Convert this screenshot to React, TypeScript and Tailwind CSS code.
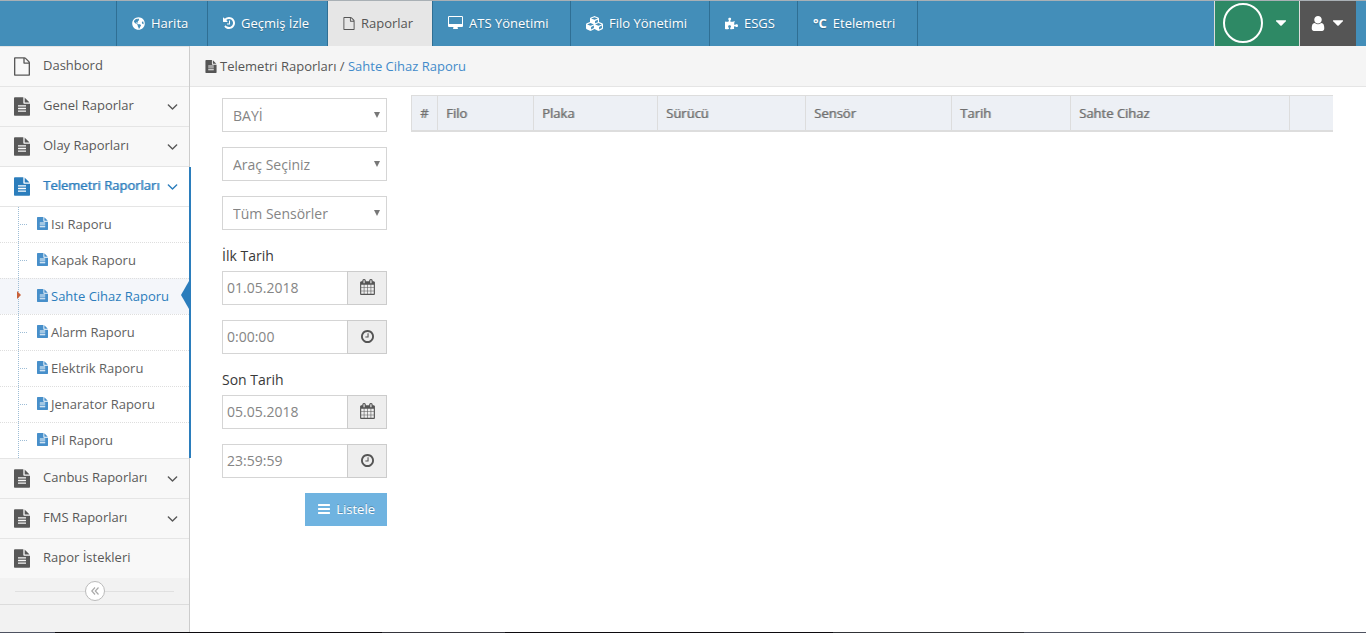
import { useState } from 'react';
import type { ReactNode } from 'react';
import { FaCubes, FaGlobeAmericas, FaPuzzlePiece } from 'react-icons/fa';

interface IconProps {
  className?: string;
}

const bar = (y: number) =>
  `M1664 ${y}v128q0 26-19 45t-45 19h-1408q-26 0-45-19t-19-45v-128q0-26 19-45t45-19h1408q26 0 45 19t19 45z`;

const glyph = (viewBox: string, d: string) =>
  function Glyph({ className = '' }: IconProps) {
    return (
      <svg viewBox={viewBox} fill="currentColor" aria-hidden="true" className={`shrink-0 ${className}`}>
        <path d={d} />
      </svg>
    );
  };

const FileIcon = glyph(
  '128 0 1536 1792',
  'M1596 380q28 28 48 76t20 88v1152q0 40-28 68t-68 28h-1344q-40 0-68-28t-28-68v-1600q0-40 28-68t68-28h896q40 0 88 20t76 48zm-444-244v376h376q-10-29-22-41l-313-313q-12-12-41-22zm384 1528v-1024h-416q-40 0-68-28t-28-68v-416h-768v1536h1280z'
);
const FileTextIcon = glyph(
  '128 0 1536 1792',
  'M1596 476q14 14 28 36h-472v-472q22 14 36 28zm-476 164h544v1056q0 40-28 68t-68 28h-1344q-40 0-68-28t-28-68v-1600q0-40 28-68t68-28h800v544q0 40 28 68t68 28zm160 736v-64q0-14-9-23t-23-9h-704q-14 0-23 9t-9 23v64q0 14 9 23t23 9h704q14 0 23-9t9-23zm0-256v-64q0-14-9-23t-23-9h-704q-14 0-23 9t-9 23v64q0 14 9 23t23 9h704q14 0 23-9t9-23zm0-256v-64q0-14-9-23t-23-9h-704q-14 0-23 9t-9 23v64q0 14 9 23t23 9h704q14 0 23-9t9-23z'
);
const AngleDownIcon = glyph(
  '384 640 1024 608',
  'M1395 736q0 13-10 23l-466 466q-10 10-23 10t-23-10l-466-466q-10-10-10-23t10-23l50-50q10-10 23-10t23 10l393 393 393-393q10-10 23-10t23 10l50 50q10 10 10 23z'
);
const CaretDownIcon = glyph(
  '384 640 1024 576',
  'M1408 704q0 26-19 45l-448 448q-19 19-45 19t-45-19l-448-448q-19-19-19-45t19-45 45-19h896q26 0 45 19t19 45z'
);
const UserIcon = glyph(
  '256 128 1280 1536',
  'M1536 1399q0 109-62.5 187t-150.5 78h-854q-88 0-150.5-78t-62.5-187q0-85 8.5-160.5t31.5-152 58.5-131 94-89 134.5-34.5q131 128 313 128t313-128q76 0 134.5 34.5t94 89 58.5 131 31.5 152 8.5 160.5zm-256-887q0 159-112.5 271.5t-271.5 112.5-271.5-112.5-112.5-271.5 112.5-271.5 271.5-112.5 271.5 112.5 112.5 271.5z'
);
const BarsIcon = glyph('128 256 1536 1280', bar(1344) + bar(832) + bar(320));
const DesktopIcon = glyph(
  '-64 0 1920 1792',
  'M1728 992v-832q0-13-9.5-22.5t-22.5-9.5h-1600q-13 0-22.5 9.5t-9.5 22.5v832q0 13 9.5 22.5t22.5 9.5h1600q13 0 22.5-9.5t9.5-22.5zm128-832v1088q0 66-47 113t-113 47h-544q0 37 16 77.5t32 71 16 43.5q0 26-19 45t-45 19h-512q-26 0-45-19t-19-45q0-14 16-44t32-70 16-78h-544q-66 0-113-47t-47-113v-1088q0-66 47-113t113-47h1600q66 0 113 47t47 113z'
);
const HistoryIcon = glyph(
  '128 128 1536 1536',
  'M1664 896q0 156-61 298t-164 245-245 164-298 61q-172 0-327-72.5t-264-204.5q-7-10-6.5-22.5t8.5-20.5l137-138q10-9 25-9 16 2 23 12 73 95 179 147t225 52q104 0 198.5-40.5t163.5-109.5 109.5-163.5 40.5-198.5-40.5-198.5-109.5-163.5-163.5-109.5-198.5-40.5q-98 0-188 35.5t-160 101.5l137 138q31 30 14 69-17 40-59 40h-448q-26 0-45-19t-19-45v-448q0-42 40-59 39-17 69 14l130 129q107-101 244.5-156.5t284.5-55.5q156 0 298 61t245 164 164 245 61 298zm-640-288v448q0 14-9 23t-23 9h-320q-14 0-23-9t-9-23v-64q0-14 9-23t23-9h224v-352q0-14 9-23t23-9h64q14 0 23 9t9 23z'
);
const CalendarIcon = glyph(
  '64 0 1664 1792',
  'M192 1664h288v-288h-288v288zm352 0h320v-288h-320v288zm-352-352h288v-320h-288v320zm352 0h320v-320h-320v320zm-352-384h288v-288h-288v288zm736 736h320v-288h-320v288zm-384-736h320v-288h-320v288zm768 736h288v-288h-288v288zm-384-352h320v-320h-320v320zm-352-864v-288q0-13-9.5-22.5t-22.5-9.5h-64q-13 0-22.5 9.5t-9.5 22.5v288q0 13 9.5 22.5t22.5 9.5h64q13 0 22.5-9.5t9.5-22.5zm736 864h288v-320h-288v320zm-384-384h320v-288h-320v288zm384 0h288v-288h-288v288zm32-480v-288q0-13-9.5-22.5t-22.5-9.5h-64q-13 0-22.5 9.5t-9.5 22.5v288q0 13 9.5 22.5t22.5 9.5h64q13 0 22.5-9.5t9.5-22.5zm384-64v1280q0 52-38 90t-90 38h-1408q-52 0-90-38t-38-90v-1280q0-52 38-90t90-38h128v-96q0-66 47-113t113-47h64q66 0 113 47t47 113v96h384v-96q0-66 47-113t113-47h64q66 0 113 47t47 113v96h128q52 0 90 38t38 90z'
);
const ClockIcon = glyph(
  '128 128 1536 1536',
  'M1024 544v448q0 14-9 23t-23 9h-320q-14 0-23-9t-9-23v-64q0-14 9-23t23-9h224v-352q0-14 9-23t23-9h64q14 0 23 9t9 23zm416 352q0-148-73-273t-198-198-273-73-273 73-198 198-73 273 73 273 198 198 273 73 273-73 198-198 73-273zm224 0q0 209-103 385.5t-279.5 279.5-385.5 103-385.5-103-279.5-279.5-103-385.5 103-385.5 279.5-279.5 385.5-103 385.5 103 279.5 279.5 103 385.5z'
);

interface NavItem {
  label: string;
  width: string;
  icon: ReactNode;
  active?: boolean;
}

const navItems: NavItem[] = [
  { label: 'Harita', width: 'w-[91px]', icon: <FaGlobeAmericas className="size-[13px]" /> },
  { label: 'Geçmiş İzle', width: 'w-[120px]', icon: <HistoryIcon className="size-3" /> },
  { label: 'Raporlar', width: 'w-[105px]', icon: <FileIcon className="h-[13px] w-3" />, active: true },
  { label: 'ATS Yönetimi', width: 'w-[138px]', icon: <DesktopIcon className="h-[14px] w-[15px]" /> },
  { label: 'Filo Yönetimi', width: 'w-[139px]', icon: <FaCubes className="size-[17px]" /> },
  { label: 'ESGS', width: 'w-[88px]', icon: <FaPuzzlePiece className="size-[13px]" /> },
  { label: 'Etelemetri', width: 'w-[120px]', icon: <span className="font-bold">°C</span> },
];

interface MenuItem {
  label: string;
  icon?: 'file';
  arrow?: boolean;
  children?: string[];
}

const menuItems: MenuItem[] = [
  { label: 'Dashbord', icon: 'file' },
  { label: 'Genel Raporlar', arrow: true },
  { label: 'Olay Raporları', arrow: true },
  {
    label: 'Telemetri Raporları',
    arrow: true,
    children: [
      'Isı Raporu',
      'Kapak Raporu',
      'Sahte Cihaz Raporu',
      'Alarm Raporu',
      'Elektrik Raporu',
      'Jenarator Raporu',
      'Pil Raporu',
    ],
  },
  { label: 'Canbus Raporları', arrow: true },
  { label: 'FMS Raporları', arrow: true },
  { label: 'Rapor İstekleri' },
];

const columns = [
  { label: '#', width: 'w-[26px]' },
  { label: 'Filo', width: 'w-[96px]' },
  { label: 'Plaka', width: 'w-[124px]' },
  { label: 'Sürücü', width: 'w-[148px]' },
  { label: 'Sensör', width: 'w-[146px]' },
  { label: 'Tarih', width: 'w-[119px]' },
  { label: 'Sahte Cihaz', width: 'w-[219px]' },
  { label: '', width: 'w-[44px]' },
];

function Navbar() {
  return (
    <header className="flex h-[46px] border-t border-[#a9b0b5] bg-[#438eb9] text-white">
      <nav className="ml-[116px] flex border-r border-[#2f6f94]">
        {navItems.map((item) => (
          <a
            key={item.label}
            href="#"
            className={`flex items-center gap-[6px] border-l border-[#2f6f94] pb-px pl-[15px] whitespace-nowrap ${item.width} ${
              item.active
                ? 'bg-[#e6e6e6] text-[#555]'
                : '[text-shadow:0_1px_1px_rgba(0,0,0,0.25)] hover:bg-[#3b83ad]'
            }`}
          >
            {item.icon}
            <span className="pb-px">{item.label}</span>
          </a>
        ))}
      </nav>
      <div className="mr-[10px] ml-auto flex">
        <button
          type="button"
          aria-label="Bildirimler"
          className="flex w-[85px] items-center gap-[13px] border-l border-[#ddd] bg-[#2e8965] pb-px pl-2"
        >
          <span className="size-10 rounded-full border-2 border-white" />
          <CaretDownIcon className="h-[6px] w-[10px]" />
        </button>
        <button
          type="button"
          aria-label="Kullanıcı"
          className="flex w-[57px] items-center gap-2 border-l border-[#ddd] bg-[#555] pb-px pl-[11px]"
        >
          <UserIcon className="h-[15px] w-[14px]" />
          <CaretDownIcon className="h-[6px] w-[10px]" />
        </button>
      </div>
    </header>
  );
}

function SubMenu({ items }: { items: string[] }) {
  const [selected, setSelected] = useState('Sahte Cihaz Raporu');

  return (
    <ul className="relative border-t border-[#e5e5e5] bg-white">
      {items.map((label, i) => {
        const active = label === selected;
        return (
          <li
            key={label}
            className={`relative ${i > 0 ? 'h-9 border-t border-dotted border-[#dedede]' : 'h-[35px]'} ${
              active ? 'bg-[#f4f6fa]' : ''
            }`}
          >
            <a
              href="#"
              onClick={() => setSelected(label)}
              className={`flex h-[33px] items-center gap-[3px] pl-[37px] ${
                active ? 'text-[#2b7dbc]' : 'text-[#616161]'
              }`}
            >
              <FileTextIcon className="h-[13px] w-[11px] text-[#478fca]" />
              {label}
            </a>
            {active ? (
              <>
                <svg viewBox="0 0 4 8" className="absolute top-3 left-[17px] z-10 h-2 w-1 fill-[#c86139]" aria-hidden="true">
                  <path d="M0 0 4 4 0 8z" />
                </svg>
                <svg viewBox="0 0 8 28" className="absolute top-[2px] right-0 h-7 w-2 fill-[#2b7dbc]" aria-hidden="true">
                  <path d="M8 0v28L0 14z" />
                </svg>
              </>
            ) : (
              <span className="absolute top-[17px] left-5 w-[7px] border-t border-dotted border-[#9dbdd6]" />
            )}
          </li>
        );
      })}
      <li aria-hidden="true" className="absolute inset-y-0 left-[18px] border-l border-dotted border-[#9dbdd6]" />
    </ul>
  );
}

function Sidebar() {
  return (
    <aside className="w-[190px] shrink-0 border-r border-[#ccc] bg-[#f2f2f2]">
      <ul>
        {menuItems.map((item) => {
          const open = Boolean(item.children);
          const Icon = item.icon === 'file' ? FileIcon : FileTextIcon;
          return (
            <li
              key={item.label}
              className={`relative border-t border-[#e5e5e5] ${open ? 'bg-white' : 'bg-[#f8f8f8]'}`}
            >
              <a
                href="#"
                className={`flex h-[39px] items-center pr-[11px] pl-[14px] whitespace-nowrap ${
                  open ? 'text-[#2b7dbc] [text-shadow:1px_0_0_rgba(43,125,188,0.6)]' : 'text-[#585858]'
                }`}
              >
                <Icon className="mr-[13px] h-[19px] w-4" />
                <span className="grow pb-[3px]">{item.label}</span>
                {item.arrow && <AngleDownIcon className="h-[6px] w-[11px]" />}
              </a>
              {item.children && (
                <>
                  <SubMenu items={item.children} />
                  <span className="absolute inset-y-0 -right-[2px] w-[2px] bg-[#2b7dbc]" />
                </>
              )}
            </li>
          );
        })}
      </ul>
      <div className="flex h-[27px] items-center border-b border-[#dcdcdc] px-[15px]">
        <span className="grow border-t border-[#e0e0e0]" />
        <button
          type="button"
          aria-label="Menüyü daralt"
          className="flex size-5 items-center justify-center rounded-full border border-[#bbb] bg-white text-[#aaa]"
        >
          <svg viewBox="0 0 8 8" className="size-2" fill="none" stroke="currentColor" strokeWidth="1.2" aria-hidden="true">
            <path d="M4 .5.8 4 4 7.5M7.5.5 4.3 4l3.2 3.5" />
          </svg>
        </button>
        <span className="grow border-t border-[#e0e0e0]" />
      </div>
    </aside>
  );
}

function SelectField({ label, value }: { label: string; value: string }) {
  return (
    <div className="relative mb-[15px]">
      <select
        aria-label={label}
        defaultValue={value}
        className="block h-[34px] w-full appearance-none border border-[#d5d5d5] bg-white pt-[2px] pl-[10px] text-sm text-[#858585]"
      >
        <option>{value}</option>
      </select>
      <svg
        viewBox="0 0 6 6"
        className="pointer-events-none absolute top-[14px] right-[7px] size-[6px] fill-[#777]"
        aria-hidden="true"
      >
        <path d="M0 0h6L3 6z" />
      </svg>
    </div>
  );
}

interface AddonFieldProps {
  id: string;
  label: string;
  value: string;
  icon: ReactNode;
}

function AddonField({ id, label, value, icon }: AddonFieldProps) {
  return (
    <div className="mb-[15px] flex h-[34px]">
      <input
        id={id}
        type="text"
        aria-label={label}
        defaultValue={value}
        className="min-w-0 grow border border-r-0 border-[#d5d5d5] bg-white pl-1 text-sm text-[#858585]"
      />
      <span className="flex w-10 shrink-0 items-center justify-center border border-[#ccc] bg-[#eee] pb-[2px] text-[#555]">
        {icon}
      </span>
    </div>
  );
}

function FilterForm() {
  return (
    <form className="w-[165px] shrink-0 pt-[3px]" onSubmit={(e) => e.preventDefault()}>
      <SelectField label="Bayi" value="BAYİ" />
      <SelectField label="Araç" value="Araç Seçiniz" />
      <SelectField label="Sensör" value="Tüm Sensörler" />
      <label htmlFor="start-date" className="mb-[5px] block pt-px text-sm text-[#393939]">
        İlk Tarih
      </label>
      <AddonField id="start-date" label="İlk Tarih" value="01.05.2018" icon={<CalendarIcon className="h-4 w-[15px]" />} />
      <AddonField id="start-time" label="İlk Saat" value="0:00:00" icon={<ClockIcon className="size-[13px]" />} />
      <label htmlFor="end-date" className="mb-[5px] block pt-px text-sm text-[#393939]">
        Son Tarih
      </label>
      <AddonField id="end-date" label="Son Tarih" value="05.05.2018" icon={<CalendarIcon className="h-4 w-[15px]" />} />
      <AddonField id="end-time" label="Son Saat" value="23:59:59" icon={<ClockIcon className="size-[13px]" />} />
      <button
        type="submit"
        className="ml-auto flex h-[33px] items-center gap-[6px] bg-[#6fb3e0] pr-3 pb-px pl-[13px] text-[13px] text-white [text-shadow:0_-1px_0_rgba(0,0,0,0.25)]"
      >
        <BarsIcon className="h-[10px] w-3" />
        Listele
      </button>
    </form>
  );
}

function ReportTable() {
  return (
    <table className="w-full table-fixed border-separate border-spacing-0 text-left">
      <thead>
        <tr className="bg-[#edf0f5] text-[#707070]">
          {columns.map((col) => (
            <th
              key={col.width}
              scope="col"
              className={`h-[37px] border-t border-b-2 border-l border-[#ddd] px-2 text-[13px] font-normal [text-shadow:1px_0_0_rgba(112,112,112,0.6)] ${col.width}`}
            >
              {col.label}
            </th>
          ))}
        </tr>
      </thead>
    </table>
  );
}

function BottomStrip() {
  return (
    <div className="flex h-px bg-[#0c0a0e]">
      <span className="w-[4%] bg-[#4e5260]" />
      <span className="ml-[24%] w-[9%] bg-[#35353c]" />
      <span className="ml-[24%] w-[14%] bg-[#303236]" />
      <span className="grow bg-[#4e5260]" />
    </div>
  );
}

export default function App() {
  return (
    <div className="flex min-h-screen flex-col bg-white font-['Open_Sans',sans-serif] text-[13px] leading-5">
      <Navbar />
      <div className="flex grow">
        <Sidebar />
        <main className="min-w-0 grow">
          <div className="flex h-[41px] items-center border-b border-[#e5e5e5] bg-[#f5f5f5] pl-[15px] text-[#555]">
            <FileTextIcon className="mr-[3px] h-[13px] w-3" />
            <span>
              Telemetri Raporları /{' '}
              <a href="#" className="text-[#428bca]">
                Sahte Cihaz Raporu
              </a>
            </span>
          </div>
          <div className="flex items-start gap-6 pt-2 pr-[33px] pl-8">
            <FilterForm />
            <ReportTable />
          </div>
        </main>
      </div>
      <BottomStrip />
    </div>
  );
}
